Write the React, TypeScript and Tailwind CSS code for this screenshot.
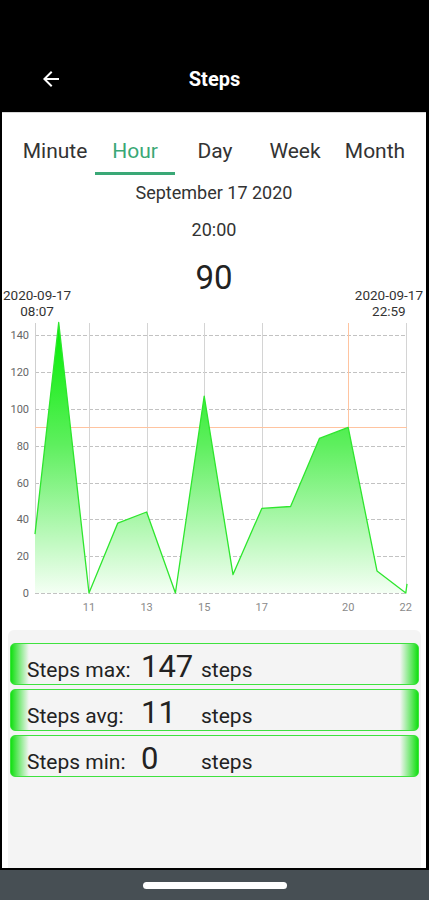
import React from "react";

const tabs = ["Minute", "Hour", "Day", "Week", "Month"];

const yv = (v: number) => 593 - v * 1.84;
const xh = (h: number) => 89 + (h - 11) * 28.8;
const crisp = (n: number) => Math.round(n) + 0.5;

const pts: [number, number][] = [
  [35, yv(32)],
  [xh(10) - 1.5, yv(147)],
  [xh(11), yv(0)],
  [xh(12), yv(38)],
  [xh(13), yv(44)],
  [xh(14), yv(0)],
  [xh(15), yv(107)],
  [xh(16), yv(10)],
  [xh(17), yv(46)],
  [xh(18), yv(47)],
  [xh(19), yv(84)],
  [xh(20), yv(90)],
  [xh(21), yv(12)],
  [xh(22), yv(0)],
  [407, yv(5)],
];

function Chart() {
  const line = pts.map((p, i) => `${i ? "L" : "M"}${p[0].toFixed(1)} ${p[1].toFixed(1)}`).join(" ");
  const area = `${line} L407 593 L35 593 Z`;
  const yTicks = [0, 20, 40, 60, 80, 100, 120, 140];
  const xTicks: [number, string][] = [
    [11, "11"],
    [13, "13"],
    [15, "15"],
    [17, "17"],
    [20, "20"],
    [22, "22"],
  ];
  return (
    <svg width="424" height="298" viewBox="2 319 424 298" className="block">
      <defs>
        <linearGradient id="g" x1="0" y1="323" x2="0" y2="593" gradientUnits="userSpaceOnUse">
          <stop offset="0" stopColor="#00ee00" />
          <stop offset="0.45" stopColor="#5eef5e" />
          <stop offset="1" stopColor="#f4fff4" />
        </linearGradient>
      </defs>
      {yTicks.map((t) => (
        <g key={t}>
          <line
            x1="35"
            x2="407"
            y1={crisp(yv(t))}
            y2={crisp(yv(t))}
            stroke="#c2c2c2"
            strokeWidth="1"
            strokeDasharray="4 2"
          />
          <text
            x="29"
            y={yv(t) + 4}
            textAnchor="end"
            fontSize="11"
            fill="#666"
            fontFamily="Roboto, sans-serif"
          >
            {t}
          </text>
        </g>
      ))}
      <line x1="35.5" x2="35.5" y1="323" y2="593" stroke="#cfcfcf" strokeWidth="1" />
      {xTicks.map(([h, l]) => (
        <g key={l}>
          <line
            x1={crisp(xh(h))}
            x2={crisp(xh(h))}
            y1="323"
            y2="593"
            stroke={h === 20 ? "#ffc4a0" : "#d4d4d4"}
            strokeWidth="1"
          />
          <text
            x={xh(h)}
            y="611"
            textAnchor="middle"
            fontSize="11"
            fill="#8a8a8a"
            fontFamily="Roboto, sans-serif"
          >
            {l}
          </text>
        </g>
      ))}
      <line x1="35" x2="407" y1={crisp(yv(90))} y2={crisp(yv(90))} stroke="#ffc4a0" strokeWidth="1" />
      <path d={area} fill="url(#g)" />
      <path d={line} fill="none" stroke="#2ee62e" strokeWidth="1.3" strokeLinejoin="round" />
    </svg>
  );
}

function StatRow({ label, value }: { label: string; value: string }) {
  return (
    <div className="h-[42px] rounded-[5px] border border-[#3ee23e] bg-[linear-gradient(to_right,#12e012,#f4f4f4_18px,#f4f4f4_389px,#12e012)] flex items-baseline pl-[16px] pt-[7px] text-[#222]">
      <span className="w-[114px] text-[21px] leading-[28px]">{label}</span>
      <span className="w-[60px] text-[31px] leading-[31px]">{value}</span>
      <span className="text-[21px] leading-[28px]">steps</span>
    </div>
  );
}

export default function App() {
  return (
    <div
      className="w-[429px] h-[900px] bg-black flex flex-col overflow-hidden"
      style={{ fontFamily: "Roboto, 'Liberation Sans', sans-serif" }}
    >
      <header className="h-[112px] flex items-center pt-[45px] shrink-0">
        <div className="w-[63px] pl-[39px]">
          <svg width="24" height="24" viewBox="0 0 24 24" fill="#fff">
            <path d="M20 11H7.83l5.59-5.59L12 4l-8 8 8 8 1.41-1.41L7.83 13H20v-2z" />
          </svg>
        </div>
        <div className="flex-1 text-center text-white font-bold text-[20px] leading-[24px]">Steps</div>
        <div className="w-[63px]" />
      </header>

      <main className="h-[756px] ml-[2px] mr-[3px] bg-white border-t border-[#d8d8d8] flex flex-col shrink-0">
        <div className="flex pl-[13px] pt-[18px]">
          {tabs.map((t) => (
            <div
              key={t}
              className={
                t === "Hour"
                  ? "w-[80px] h-[44px] flex items-center justify-center text-[21px] text-[#3aa876] border-b-[3px] border-[#3aa876]"
                  : "w-[80px] h-[44px] flex items-center justify-center text-[21px] text-[#333] border-b-[3px] border-transparent"
              }
            >
              {t}
            </div>
          ))}
        </div>
        <div className="mt-[6px] text-center text-[18px] leading-[24px] text-[#333]">September 17 2020</div>
        <div className="mt-[13px] text-center text-[18px] leading-[24px] text-[#333]">20:00</div>
        <div className="mt-[18px] text-center text-[33px] leading-[36px] text-[#222]">90</div>
        <div className="-mt-[9px] flex justify-between pl-[1px] pr-[3px] text-[13.5px] leading-[16px] text-[#333]">
          <div className="flex flex-col items-center">
            <span>2020-09-17</span>
            <span>08:07</span>
          </div>
          <div className="flex flex-col items-center">
            <span>2020-09-17</span>
            <span>22:59</span>
          </div>
        </div>
        <Chart />
        <div className="mt-[13px] ml-[6px] mr-[5px] flex-1 bg-[#f4f4f4] rounded-t-[6px] px-[2px] pt-[13px] flex flex-col gap-[4px]">
          <StatRow label="Steps max:" value="147" />
          <StatRow label="Steps avg:" value="11" />
          <StatRow label="Steps min:" value="0" />
        </div>
      </main>

      <div className="mt-[2px] flex-1 bg-[#474f54] flex items-center justify-center">
        <div className="w-[144px] h-[7px] rounded-full bg-white" />
      </div>
    </div>
  );
}
